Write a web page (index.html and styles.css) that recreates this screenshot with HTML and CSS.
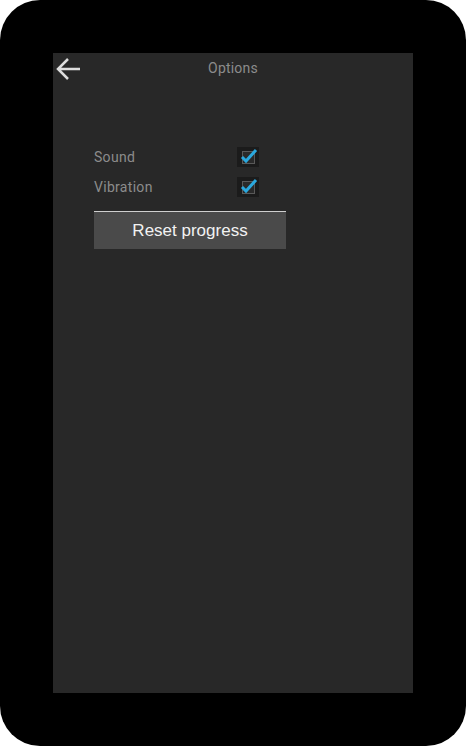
FILE: index.html
```html
<!DOCTYPE html>
<html>
<head>
<meta charset="utf-8">
<link rel="stylesheet" href="styles.css">
</head>
<body>
<div class="device">
  <div class="screen">
    <div class="header">
      <div class="back">
        <svg width="26" height="24" viewBox="0 0 26 24"><path d="M25 12H3.5M13 2L3 12L13 22" fill="none" stroke="#dedede" stroke-width="2.5" stroke-linejoin="miter"/></svg>
      </div>
      <div class="title">Options</div>
      <div></div>
    </div>
    <div class="content">
      <div class="row">
        <span class="label">Sound</span>
        <span class="check"><span class="box"></span><svg class="tick" width="22" height="20" viewBox="0 0 22 20"><path d="M5 10L9 14L19 3" fill="none" stroke="#2aa8de" stroke-width="3"/></svg></span>
      </div>
      <div class="row">
        <span class="label">Vibration</span>
        <span class="check"><span class="box"></span><svg class="tick" width="22" height="20" viewBox="0 0 22 20"><path d="M5 10L9 14L19 3" fill="none" stroke="#2aa8de" stroke-width="3"/></svg></span>
      </div>
      <div class="button">Reset progress</div>
    </div>
  </div>
</div>
</body>
</html>
```

FILE: styles.css
```css
html, body {
  margin: 0;
  padding: 0;
  background: #ffffff;
}
.device {
  width: 466px;
  height: 746px;
  box-sizing: border-box;
  padding: 53px;
  background: #000;
  border-radius: 40px;
}
.screen {
  width: 360px;
  height: 640px;
  background: #282828;
}
.header {
  height: 32px;
  display: grid;
  grid-template-columns: 1fr auto 1fr;
  align-items: start;
}
.back {
  padding: 4px 0 0 2px;
  height: 24px;
}
.back svg {
  display: block;
}
.title {
  font-family: Roboto, sans-serif;
  font-size: 14px;
  line-height: 16px;
  letter-spacing: 0.2px;
  color: #8c8c8c;
  margin-top: 7px;
}
.content {
  padding: 57px 0 0 41px;
}
.row {
  display: grid;
  grid-template-columns: 143px 22px;
  height: 30px;
  align-items: center;
}
.label {
  font-family: Roboto, sans-serif;
  font-size: 14px;
  line-height: 16px;
  letter-spacing: 0.3px;
  color: #8c8c8c;
}
.check {
  position: relative;
  width: 22px;
  height: 20px;
  background: #1b1b1b;
  display: flex;
  align-items: center;
  justify-content: center;
}
.box {
  width: 11px;
  height: 11px;
  border: 1.5px solid #595959;
  background: #2a2a2a;
  margin-top: 1px;
}
.tick {
  position: absolute;
  left: 0;
  top: 0;
}
.button {
  margin-top: 9px;
  width: 192px;
  height: 37px;
  border-top: 1px solid #cfcfcf;
  background: #4a4a4a;
  display: flex;
  align-items: center;
  justify-content: center;
  font-family: "Liberation Sans", Arial, sans-serif;
  font-size: 17px;
  color: #f2f2f2;
}
```
